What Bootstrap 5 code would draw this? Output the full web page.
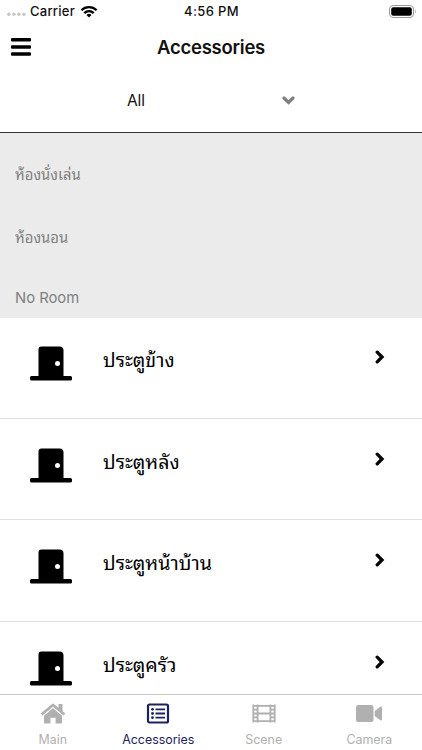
<!DOCTYPE html>
<html lang="th">
<head>
<meta charset="utf-8">
<meta name="viewport" content="width=device-width, initial-scale=1">
<title>Accessories</title>
<link rel="stylesheet" href="https://cdn.jsdelivr.net/npm/bootstrap@5.3.0/dist/css/bootstrap.min.css">
<style>
  body { font-family: Inter, "Noto Sans Thai Looped", "Loma", "Garuda", "Waree", "Umpush", "Tlwg Typo", "Norasi", "Noto Serif Thai", "FreeSerif", sans-serif; color: #111; background: #fff; line-height: 1.25; }
  svg { display: block; flex: none; }
  .app { height: 750px; }
  .status-bar { height: 23px; font-size: 13px; font-weight: 500; padding: 0 6px 0 7px; }
  .status-bar .side { flex: 1 1 0; }
  .status-bar .clock { letter-spacing: .35px; }
  .carrier { margin-left: 4px; margin-right: 5px; letter-spacing: .25px; }
  .top-bar { height: 48px; padding: 0 11px; }
  .top-bar h1 { font-size: 18.5px; font-weight: 600; letter-spacing: -.25px; }
  .top-bar .side { width: 20px; }
  .filter { height: 62px; border-bottom: 1px solid #333; padding: 0 127px; font-size: 15.5px; }
  .filter span { margin-top: -2px; letter-spacing: -.1px; }
  .filter svg { margin-top: -3px; }
  .rooms { background: #ebebeb; height: 185px; padding-left: 15px; color: #808080; font-size: 14.8px; }
  .rooms div { line-height: 20px; }
  .rooms div:nth-child(1) { margin-top: 32px; }
  .rooms div:nth-child(2) { margin-top: 43px; }
  .rooms div:nth-child(3) { margin-top: 40px; }
  .device { height: 101.7px; border-bottom: 1px solid #dfdfdf; padding: 28px 37px 0 30px; font-size: 19.6px; color: #000; }
  .device:first-child { height: 100.7px; }
  .device + .device { padding-top: 29px; }
  .device .name { margin: -1px auto 0 31px; line-height: 30px; }
  .device .go { margin-top: 4px; }
  .tabs { height: 56px; border-top: 1px solid #c8c8c8; font-size: 12.4px; color: #b0b0b0; background: #fff; }
  .tabs a { color: inherit; padding-top: 7px; }
  .tabs a.current { color: #1c2260; }
  .tabs a span { line-height: 16px; margin-top: 6px; }
</style>
</head>
<body>
<svg width="0" height="0" class="position-absolute">
  <symbol id="door" viewBox="0 0 42 35">
    <path d="M11.5 0.5h18a4 4 0 0 1 4 4V30H40.500a1.500 1.500 0 0 1 1.500 1.500V33a1.500 1.500 0 0 1-1.500 1.500H1.500A1.500 1.500 0 0 1 0 33v-1.500A1.500 1.500 0 0 1 1.500 30H8.500V3.500a3 3 0 0 1 3-3z"/>
    <circle cx="27.500" cy="17.500" r="2.500" fill="#fff"/>
  </symbol>
  <symbol id="chevron" viewBox="0 0 10 14">
    <path d="M2.200 2.200l4.800 4.800L2.200 11.800" fill="none" stroke="#000" stroke-width="3.300" stroke-linecap="round" stroke-linejoin="miter"/>
  </symbol>
</svg>
<main class="app d-flex flex-column overflow-hidden">
  <div class="status-bar d-flex align-items-center flex-shrink-0">
    <div class="side d-flex align-items-center">
      <svg width="19" height="8" viewBox="0 0 19 8" fill="#c6c6c6"><circle cx="1.900" cy="6.300" r="1.700"/><circle cx="6.900" cy="6.300" r="1.700"/><circle cx="11.900" cy="6.300" r="1.700"/><circle cx="16.900" cy="6.300" r="1.700"/></svg>
      <span class="carrier">Carrier</span>
      <svg width="18" height="13" viewBox="0 0 18 13" fill="none" stroke="#000" stroke-width="2.300"><path d="M1.400 5.300a10.800 10.800 0 0 1 15.200 0M4.300 8.100a6.700 6.700 0 0 1 9.400 0"/><path d="M9 12.500L6.500 10a3.600 3.600 0 0 1 5 0z" fill="#000" stroke="none"/></svg>
    </div>
    <span class="clock">4:56 PM</span>
    <div class="side d-flex justify-content-end">
      <svg width="27" height="13" viewBox="0 0 27 13"><rect x=".5" y=".5" width="24" height="12" rx="3.500" fill="none" stroke="#999"/><rect x="2.200" y="2.200" width="20.600" height="8.600" rx="2"/><path d="M26 4.800v3.600c1-.6 1-3 0-3.600z" fill="#999"/></svg>
    </div>
  </div>
  <header class="top-bar d-flex align-items-center justify-content-between flex-shrink-0">
    <svg class="side" width="20" height="18" viewBox="0 0 20 18"><g fill="#000"><rect width="20" height="3.500" rx="1"/><rect y="7.200" width="20" height="3.500" rx="1"/><rect y="14.300" width="20" height="3.500" rx="1"/></g></svg>
    <h1 class="m-0">Accessories</h1>
    <div class="side"></div>
  </header>
  <div class="filter d-flex align-items-center justify-content-between flex-shrink-0">
    <span>All</span>
    <svg width="13" height="9" viewBox="0 0 13 9"><path d="M2 2l4.500 4.400L11 2" fill="none" stroke="#808080" stroke-width="3.200" stroke-linecap="round"/></svg>
  </div>
  <section class="rooms d-flex flex-column flex-shrink-0">
    <div>ห้องนั่งเล่น</div>
    <div>ห้องนอน</div>
    <div>No Room</div>
  </section>
  <section class="flex-grow-1 overflow-hidden">
    <div class="device d-flex align-items-start"><svg width="42" height="35"><use href="#door"/></svg><span class="name">ประตูข้าง</span><svg class="go" width="10" height="14"><use href="#chevron"/></svg></div>
    <div class="device d-flex align-items-start"><svg width="42" height="35"><use href="#door"/></svg><span class="name">ประตูหลัง</span><svg class="go" width="10" height="14"><use href="#chevron"/></svg></div>
    <div class="device d-flex align-items-start"><svg width="42" height="35"><use href="#door"/></svg><span class="name">ประตูหน้าบ้าน</span><svg class="go" width="10" height="14"><use href="#chevron"/></svg></div>
    <div class="device d-flex align-items-start"><svg width="42" height="35"><use href="#door"/></svg><span class="name">ประตูครัว</span><svg class="go" width="10" height="14"><use href="#chevron"/></svg></div>
  </section>
  <nav class="tabs row g-0 flex-shrink-0">
    <a class="col-3 d-flex flex-column align-items-center text-decoration-none" href="#">
      <svg width="26" height="24" viewBox="0 0 26 24" fill="currentColor"><path d="M1.500 12.500L13 3 24.500 12.500" fill="none" stroke="currentColor" stroke-width="2.700" stroke-linejoin="round"/><path d="M18.500 2h4v9.500l-4-3.500z"/><path d="M13 6.200L22 13.700V20.500a1 1 0 0 1-1 1H15.600v-5.800h-5.200v5.800H5a1 1 0 0 1-1-1v-6.800z"/></svg>
      <span>Main</span>
    </a>
    <a class="col-3 current d-flex flex-column align-items-center text-decoration-none" href="#">
      <svg width="24" height="24" viewBox="0 0 24 24" fill="currentColor"><rect x="2" y="2.500" width="20" height="18" rx="1.500" fill="none" stroke="currentColor" stroke-width="2.200"/><circle cx="6.500" cy="7.300" r="1.400"/><circle cx="6.500" cy="11.500" r="1.400"/><circle cx="6.500" cy="15.700" r="1.400"/><path d="M9.500 6.400H19v1.900H9.500zM9.500 10.500H19v1.900H9.500zM9.500 14.700H19v1.900H9.500z"/></svg>
      <span>Accessories</span>
    </a>
    <a class="col-3 d-flex flex-column align-items-center text-decoration-none" href="#">
      <svg width="24" height="24" viewBox="0 0 24 24" fill="none" stroke="currentColor" stroke-width="1.800"><g transform="translate(0 -.5)"><path d="M1.300 3v18M5.600 3v18M18.400 3v18M22.700 3v18"/><path d="M1 4.300h4.500M1 8.100h4.500M1 12h4.500M1 15.900h4.500M1 19.700h4.500M18.500 4.300H23M18.500 8.100H23M18.500 12H23M18.500 15.900H23M18.500 19.700H23M5.500 4.300h13M5.500 12h13M5.500 19.700h13"/></g></svg>
      <span>Scene</span>
    </a>
    <a class="col-3 d-flex flex-column align-items-center text-decoration-none" href="#">
      <svg width="26" height="24" viewBox="0 0 26 24" fill="currentColor"><rect x="0" y="3" width="17.500" height="17" rx="2.500"/><path d="M18.700 9L24.300 4.800Q26 4.100 26 5.700V17.300Q26 18.900 24.300 18.200L18.700 14z"/></svg>
      <span>Camera</span>
    </a>
  </nav>
</main>
<script src="https://cdn.jsdelivr.net/npm/bootstrap@5.3.0/dist/js/bootstrap.bundle.min.js"></script>
</body>
</html>
